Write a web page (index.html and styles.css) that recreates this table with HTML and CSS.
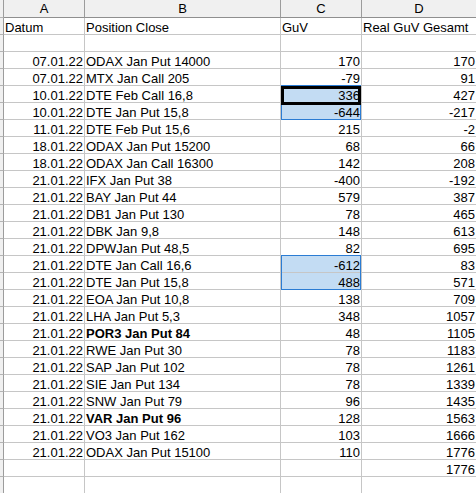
FILE: index.html
```html
<!DOCTYPE html>
<html>
<head>
<meta charset="utf-8">
<link rel="stylesheet" href="styles.css">
</head>
<body>
<div class="sheet">
  <div class="hd rh"></div><div class="hd">A</div><div class="hd">B</div><div class="hd">C</div><div class="hd">D</div>

  <div class="rh"></div><div class="c">Datum</div><div class="c">Position Close</div><div class="c">GuV</div><div class="c">Real GuV Gesamt</div>
  <div class="rh"></div><div class="c"></div><div class="c"></div><div class="c"></div><div class="c"></div>

  <div class="rh"></div><div class="c n">07.01.22</div><div class="c">ODAX Jan Put 14000</div><div class="c n">170</div><div class="c n">170</div>
  <div class="rh"></div><div class="c n">07.01.22</div><div class="c">MTX Jan Call 205</div><div class="c n">-79</div><div class="c n">91</div>
  <div class="rh"></div><div class="c n">10.01.22</div><div class="c">DTE Feb Call 16,8</div><div class="c n sel range active">336</div><div class="c n">427</div>
  <div class="rh"></div><div class="c n">10.01.22</div><div class="c">DTE Jan Put 15,8</div><div class="c n sel">-644</div><div class="c n">-217</div>
  <div class="rh"></div><div class="c n">11.01.22</div><div class="c">DTE Feb Put 15,6</div><div class="c n">215</div><div class="c n">-2</div>
  <div class="rh"></div><div class="c n">18.01.22</div><div class="c">ODAX Jan Put 15200</div><div class="c n">68</div><div class="c n">66</div>
  <div class="rh"></div><div class="c n">18.01.22</div><div class="c">ODAX Jan Call 16300</div><div class="c n">142</div><div class="c n">208</div>
  <div class="rh"></div><div class="c n">21.01.22</div><div class="c">IFX Jan Put 38</div><div class="c n">-400</div><div class="c n">-192</div>
  <div class="rh"></div><div class="c n">21.01.22</div><div class="c">BAY Jan Put 44</div><div class="c n">579</div><div class="c n">387</div>
  <div class="rh"></div><div class="c n">21.01.22</div><div class="c">DB1 Jan Put 130</div><div class="c n">78</div><div class="c n">465</div>
  <div class="rh"></div><div class="c n">21.01.22</div><div class="c">DBK Jan 9,8</div><div class="c n">148</div><div class="c n">613</div>
  <div class="rh"></div><div class="c n">21.01.22</div><div class="c">DPWJan Put 48,5</div><div class="c n">82</div><div class="c n">695</div>
  <div class="rh"></div><div class="c n">21.01.22</div><div class="c">DTE Jan Call 16,6</div><div class="c n sel range">-612</div><div class="c n">83</div>
  <div class="rh"></div><div class="c n">21.01.22</div><div class="c">DTE Jan Put 15,8</div><div class="c n sel">488</div><div class="c n">571</div>
  <div class="rh"></div><div class="c n">21.01.22</div><div class="c">EOA Jan Put 10,8</div><div class="c n">138</div><div class="c n">709</div>
  <div class="rh"></div><div class="c n">21.01.22</div><div class="c">LHA Jan Put 5,3</div><div class="c n">348</div><div class="c n">1057</div>
  <div class="rh"></div><div class="c n">21.01.22</div><div class="c b">POR3 Jan Put 84</div><div class="c n">48</div><div class="c n">1105</div>
  <div class="rh"></div><div class="c n">21.01.22</div><div class="c">RWE Jan Put 30</div><div class="c n">78</div><div class="c n">1183</div>
  <div class="rh"></div><div class="c n">21.01.22</div><div class="c">SAP Jan Put 102</div><div class="c n">78</div><div class="c n">1261</div>
  <div class="rh"></div><div class="c n">21.01.22</div><div class="c">SIE Jan Put 134</div><div class="c n">78</div><div class="c n">1339</div>
  <div class="rh"></div><div class="c n">21.01.22</div><div class="c">SNW Jan Put 79</div><div class="c n">96</div><div class="c n">1435</div>
  <div class="rh"></div><div class="c n">21.01.22</div><div class="c b">VAR Jan Put 96</div><div class="c n">128</div><div class="c n">1563</div>
  <div class="rh"></div><div class="c n">21.01.22</div><div class="c">VO3 Jan Put 162</div><div class="c n">103</div><div class="c n">1666</div>
  <div class="rh"></div><div class="c n">21.01.22</div><div class="c">ODAX Jan Put 15100</div><div class="c n">110</div><div class="c n">1776</div>
  <div class="rh"></div><div class="c"></div><div class="c"></div><div class="c"></div><div class="c n">1776</div>
  <div class="rh"></div><div class="c"></div><div class="c"></div><div class="c"></div><div class="c"></div>
</div>
</body>
</html>
```

FILE: styles.css
```css
html, body {
  margin: 0;
  padding: 0;
  background: #ffffff;
  overflow: hidden;
}

.sheet {
  display: grid;
  grid-template-columns: 4px 81px 196px 81px 115px;
  grid-template-rows: 18px;
  grid-auto-rows: 17px;
  font-family: "Liberation Sans", Arial, sans-serif;
  font-size: 13px;
  color: #000;
  width: 477px;
}

.sheet > div {
  box-sizing: border-box;
  border-right: 1px solid #c6c6c6;
  border-bottom: 1px solid #c6c6c6;
  padding: 3px 1px 0 1px;
  line-height: 13px;
  white-space: nowrap;
  overflow: visible;
  position: relative;
}

.sheet > .hd {
  background: #f0f0f0;
  border-right-color: #9c9c9c;
  border-bottom-color: #8f8f8f;
  text-align: center;
  padding-top: 2px;
}

.sheet > .rh {
  background: #f0f0f0;
  border-right-color: #9c9c9c;
  border-bottom-color: #b4b4b4;
  padding: 0;
}

.sheet > .n {
  text-align: right;
  padding-right: 1px;
}

.sheet > .b {
  font-weight: bold;
}

.sheet > .sel {
  background: #c3dcf3;
}

.sheet > .range::before {
  content: "";
  position: absolute;
  left: 0;
  top: -1px;
  width: 80px;
  height: 35px;
  box-sizing: border-box;
  border: 1px solid #2b7cd3;
  z-index: 1;
  pointer-events: none;
}

.sheet > .active::after {
  content: "";
  position: absolute;
  left: 0;
  top: 0;
  width: 80px;
  height: 19px;
  box-sizing: border-box;
  border: 3px solid #000;
  z-index: 2;
  pointer-events: none;
}
```
